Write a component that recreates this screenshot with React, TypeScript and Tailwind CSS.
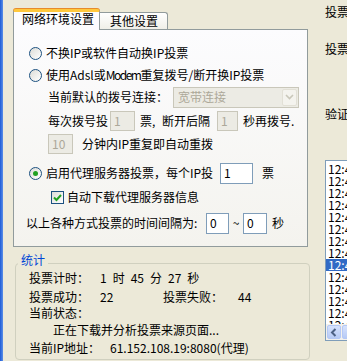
import React from 'react';

const Radio = ({ checked }: { checked?: boolean }) => (
  <span className="w-[13px] h-[13px] shrink-0 rounded-full border border-[#1c5180] bg-[linear-gradient(135deg,#dcdcd7,#ffffff)] flex items-center justify-center">
    {checked && <span className="w-[5px] h-[5px] rounded-full bg-[#21a121]" />}
  </span>
);

const Check = () => (
  <span className="w-[13px] h-[13px] shrink-0 border border-[#1c5180] bg-[linear-gradient(135deg,#dcdcd7,#ffffff)] flex items-center justify-center">
    <svg width="11" height="11" viewBox="0 0 11 11">
      <path d="M2 5.5 L4.5 8 L9 3" fill="none" stroke="#21a121" strokeWidth="2" />
    </svg>
  </span>
);

// edit box, greyed when disabled
const Box = ({ v, className, off }: { v: string; className: string; off?: boolean }) => (
  <span
    className={
      'shrink-0 border flex items-center pl-[3px] ' +
      (off ? 'bg-[#ecebe4] border-[#c9c7ba] text-[#aca899] ' : 'bg-white border-[#7f9db9] text-black ') +
      className
    }
  >
    {v}
  </span>
);

const logRows = [
  '12:45:02 投票成功',
  '12:45:04 投票成功',
  '12:45:06 投票失败',
  '12:45:08 投票成功',
  '12:45:10 投票成功',
  '12:45:12 投票失败',
  '12:45:14 投票成功',
  '12:45:16 投票成功',
  '12:45:18 投票成功',
  '12:45:20 投票失败',
  '12:45:22 投票成功',
  '12:45:24 投票成功',
  '12:45:26 投票成功',
  '12:45:27 投票成功',
];

export default function App() {
  return (
    <div className="w-[347px] h-[361px] overflow-hidden bg-[#ece9d8] flex font-['Noto_Sans_CJK_SC',sans-serif] text-[12px] leading-[12px] text-black">
      <div className="w-[3px] shrink-0 bg-[linear-gradient(90deg,#1e5bd6,#5b8fe8)]" />

      {/* left column */}
      <div className="ml-[10px] w-[297px] shrink-0 flex flex-col pt-[9px]">
        {/* tabs */}
        <div className="flex items-end h-[20px]">
          <div className="relative z-10 w-[87px] h-[21px] mb-[-1px] border-x border-[#919b9c] border-t-[3px] border-t-[#ffc83c] rounded-t-[3px] shadow-[0_-1px_0_#e68b2c] bg-[#fcfcfe] pl-[8px] pt-[1px]">
            网络环境设置
          </div>
          <div className="w-[68px] h-[17px] border-t border-r border-[#919b9c] rounded-tr-[3px] bg-[linear-gradient(180deg,#ffffff,#f0efe8)] pl-[10px] pt-[2px]">
            其他设置
          </div>
        </div>

        {/* panel */}
        <div className="w-[295px] h-[218px] border border-[#919b9c] bg-[linear-gradient(180deg,#fcfcfe,#f4f3ee)] flex flex-col pt-[12px]">
          <div className="h-[22px] flex items-center pl-[15px]">
            <Radio />
            <span className="ml-[4px]">不换IP或软件自动换IP投票</span>
          </div>
          <div className="h-[22px] flex items-center pl-[15px]">
            <Radio />
            <span className="ml-[4px] whitespace-nowrap">
              使用Adsl或<span className="tracking-[-1.5px]">Modem</span>重复拨号/断开换IP投票
            </span>
          </div>
          <div className="h-[22px] flex items-center pl-[34px]">
            <span>当前默认的拨号连接：</span>
            <span className="ml-[5px] w-[126px] h-[21px] border border-[#c9c7ba] bg-[#ecebe4] flex items-center justify-between pl-[4px] pr-[1px] text-[#aca899]">
              宽带连接
              <span className="w-[15px] h-[17px] border border-[#e2e0d6] rounded-[2px] bg-[#f4f3ee] flex items-center justify-center">
                <svg width="9" height="6" viewBox="0 0 9 6">
                  <path d="M1 1 L4.5 4.5 L8 1" fill="none" stroke="#c9c7ba" strokeWidth="1.6" />
                </svg>
              </span>
            </span>
          </div>
          <div className="h-[26px] flex items-center pl-[34px] whitespace-nowrap">
            <span>每次拨号投</span>
            <Box v="1" off className="ml-[2px] w-[25px] h-[20px]" />
            <span className="ml-[5px] w-[22px]">票,</span>
            <span>断开后隔</span>
            <Box v="1" off className="ml-[7px] w-[21px] h-[20px]" />
            <span className="ml-[5px]">秒再拨号.</span>
          </div>
          <div className="h-[20px] flex items-center pl-[34px]">
            <Box v="10" off className="w-[25px] h-[20px]" />
            <span className="ml-[9px]">分钟内IP重复即自动重拨</span>
          </div>
          <div className="mt-[7px] h-[24px] flex items-center pl-[15px] whitespace-nowrap">
            <Radio checked />
            <span className="ml-[4px] w-[174px]">启用代理服务器投票，每个IP投</span>
            <Box v="1" className="w-[33px] h-[21px]" />
            <span className="ml-[9px]">票</span>
          </div>
          <div className="h-[24px] flex items-center pl-[37px]">
            <Check />
            <span className="ml-[3px]">自动下载代理服务器信息</span>
          </div>
          <div className="mt-[1px] h-[26px] flex items-center pl-[12px] whitespace-nowrap">
            <span className="w-[180px]">以上各种方式投票的时间间隔为:</span>
            <Box v="0" className="w-[23px] h-[21px]" />
            <span className="w-[14px] text-center">~</span>
            <Box v="0" className="w-[24px] h-[21px]" />
            <span className="ml-[5px]">秒</span>
          </div>
        </div>

        {/* statistics */}
        <fieldset className="ml-[2px] mt-[7px] w-[295px] h-[106px] border border-[#d0d0bf] rounded-[4px] whitespace-nowrap">
          <legend className="ml-[2px] px-[3px] pb-[6px] leading-[12px] text-[#0046d5]">统计</legend>
          <div className="pl-[13px] flex flex-col">
            <div className="h-[12px] flex">
              <span className="w-[71px]">投票计时：</span>
              <span>1</span>
              <span className="ml-[6px]">时</span>
              <span className="ml-[6px]">45</span>
              <span className="ml-[6px]">分</span>
              <span className="ml-[6px]">27</span>
              <span className="ml-[6px]">秒</span>
            </div>
            <div className="mt-[7px] h-[12px] flex">
              <span className="w-[71px]">投票成功：</span>
              <span className="w-[63px]">22</span>
              <span className="w-[75px]">投票失败：</span>
              <span>44</span>
            </div>
            <div className="mt-[4px] h-[12px] flex">
              <span>当前状态：</span>
            </div>
            <div className="mt-[5px] h-[12px] flex pl-[24px]">
              <span>正在下载并分析投票来源页面...</span>
            </div>
            <div className="mt-[6px] h-[12px] flex">
              <span className="w-[81px]">当前IP地址：</span>
              <span>61.152.108.19:8080(代理)</span>
            </div>
          </div>
        </fieldset>
      </div>

      {/* right column, cut off by the window edge */}
      <div className="ml-[15px] shrink-0 flex flex-col pt-[6px] whitespace-nowrap">
        <div className="h-[12px]">投票</div>
        <div className="mt-[25px] h-[12px]">投票</div>
        <div className="mt-[53px] h-[12px]">验证</div>
        <div className="mt-[40px] w-[120px] h-[181px] border border-[#7f9db9] bg-white flex flex-col">
          <div className="h-[163px] overflow-hidden pt-[2px] flex flex-col">
            {logRows.map((r, i) => (
              <div
                key={i}
                className={'h-[12px] shrink-0 pl-[2px] ' + (i === 8 ? 'bg-[#316ac5] text-white' : '')}
              >
                {r}
              </div>
            ))}
          </div>
          <div className="h-[16px] bg-[#f3f1ec] flex gap-[1px] p-[1px]">
            <span className="w-[14px] h-[14px] rounded-[2px] border border-[#b4c8f6] bg-[linear-gradient(180deg,#d6e2fd,#b7caf5)] flex items-center justify-center">
              <svg width="8" height="9" viewBox="0 0 8 9">
                <path d="M5.5 1 L2 4.5 L5.5 8" fill="none" stroke="#4d6185" strokeWidth="2" />
              </svg>
            </span>
            <span className="w-[60px] h-[14px] rounded-[2px] border border-[#b4c8f6] bg-[linear-gradient(180deg,#d6e2fd,#b7caf5)]" />
          </div>
        </div>
      </div>
    </div>
  );
}
